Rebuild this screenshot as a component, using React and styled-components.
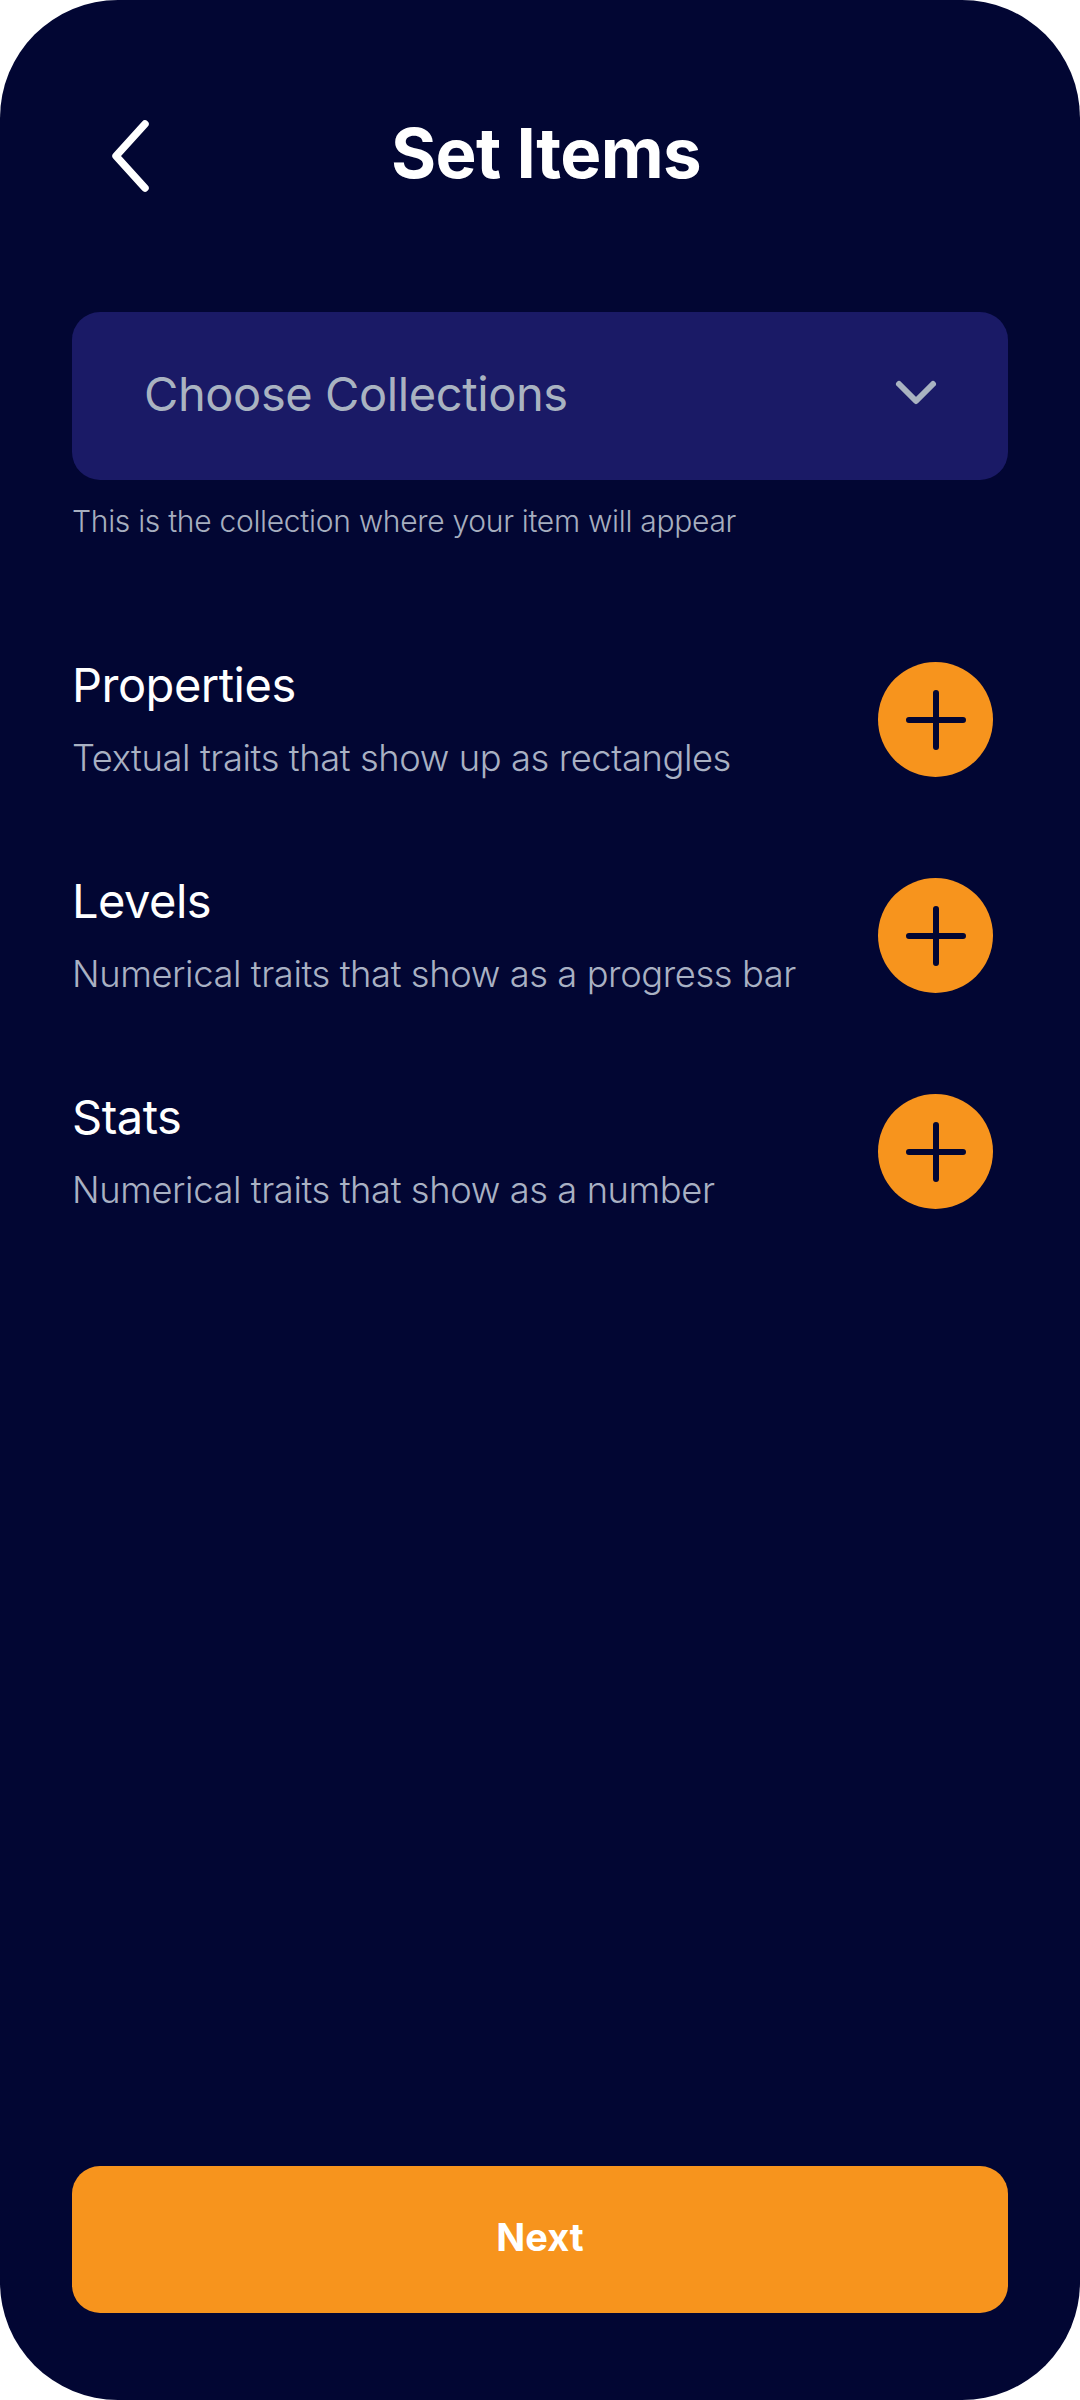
import React from 'react'
import { styled, createGlobalStyle } from 'styled-components'

const GlobalStyle = createGlobalStyle`
*{
  padding: 0;
  margin: 0;
  box-sizing: border-box;
  font-family: 'Inter', 'Noto Sans', sans-serif;
}
body{
  background-color: #fff;
}
`

const Screen = styled.div`
width: 1080px;
height: 2400px;
background-color: #020633;
border-radius: 118px;
padding: 0 72px 87px;
display: flex;
flex-direction: column;
overflow: hidden;
`

const Header = styled.div`
position: relative;
height: 312px;
display: flex;
align-items: flex-start;
justify-content: center;
padding-top: 115px;
padding-left: 12px;
`

const BackButton = styled.button`
position: absolute;
left: 36px;
top: 118px;
background: none;
border: none;
cursor: pointer;
display: flex;
`

const Title = styled.h1`
color: #fff;
font-size: 69px;
font-weight: 700;
letter-spacing: -0.6px;
line-height: 76px;
`

const Select = styled.div`
height: 168px;
border-radius: 28px;
background-color: #1a1a66;
display: flex;
align-items: center;
justify-content: space-between;
padding: 0 70px 6px 72px;
cursor: pointer;
`

const SelectLabel = styled.span`
color: #a9b3c1;
font-size: 47px;
font-weight: 400;
letter-spacing: -0.4px;
`

const Helper = styled.p`
margin-top: 23px;
color: #a6aebf;
font-size: 30px;
font-weight: 300;
letter-spacing: -0.3px;
`

const List = styled.div`
margin-top: 120px;
display: flex;
flex-direction: column;
gap: 95px;
`

const Row = styled.div`
display: flex;
align-items: center;
justify-content: space-between;
padding-right: 15px;
`

const RowText = styled.div`
display: flex;
flex-direction: column;
gap: 25px;
`

const RowTitle = styled.h3`
color: #fff;
font-size: 47px;
font-weight: 400;
letter-spacing: -0.5px;
line-height: 52px;
`

const RowSub = styled.p`
color: #a9b1c3;
font-size: 36.3px;
font-weight: 300;
letter-spacing: -0.4px;
line-height: 44px;
`

const AddButton = styled.button`
width: 115px;
height: 115px;
border-radius: 50%;
border: none;
background-color: #f7941d;
display: flex;
align-items: center;
justify-content: center;
cursor: pointer;
flex-shrink: 0;
`

const NextButton = styled.button`
margin-top: auto;
height: 147px;
border-radius: 28px;
border: none;
background-color: #f7941d;
color: #fff;
font-size: 38px;
font-weight: 700;
padding-bottom: 6px;
cursor: pointer;
`

const Plus = () => (
  <svg width="62" height="62" viewBox="0 0 62 62">
    <path d="M31 4v54M4 31h54" stroke="#020633" strokeWidth="6" strokeLinecap="round" />
  </svg>
)

const traits = [
  { title: 'Properties', sub: 'Textual traits that show up as rectangles' },
  { title: 'Levels', sub: 'Numerical traits that show as a progress bar' },
  { title: 'Stats', sub: 'Numerical traits that show as a number' },
]

const App = () => {
  return (
    <Screen>
      <GlobalStyle />
      <Header>
        <BackButton>
          <svg width="44" height="76" viewBox="0 0 44 76">
            <path d="M37 6L8 38l29 32" fill="none" stroke="#fff" strokeWidth="7.5" strokeLinecap="round" strokeLinejoin="round" />
          </svg>
        </BackButton>
        <Title>Set Items</Title>
      </Header>

      <Select>
        <SelectLabel>Choose Collections</SelectLabel>
        <svg width="44" height="28" viewBox="0 0 44 28">
          <path d="M5 5l17 17L39 5" fill="none" stroke="#a9b3c1" strokeWidth="6" strokeLinecap="round" strokeLinejoin="round" />
        </svg>
      </Select>
      <Helper>This is the collection where your item will appear</Helper>

      <List>
        {traits.map(({ title, sub }) => (
          <Row key={title}>
            <RowText>
              <RowTitle>{title}</RowTitle>
              <RowSub>{sub}</RowSub>
            </RowText>
            <AddButton>
              <Plus />
            </AddButton>
          </Row>
        ))}
      </List>

      <NextButton>Next</NextButton>
    </Screen>
  )
}

export default App
